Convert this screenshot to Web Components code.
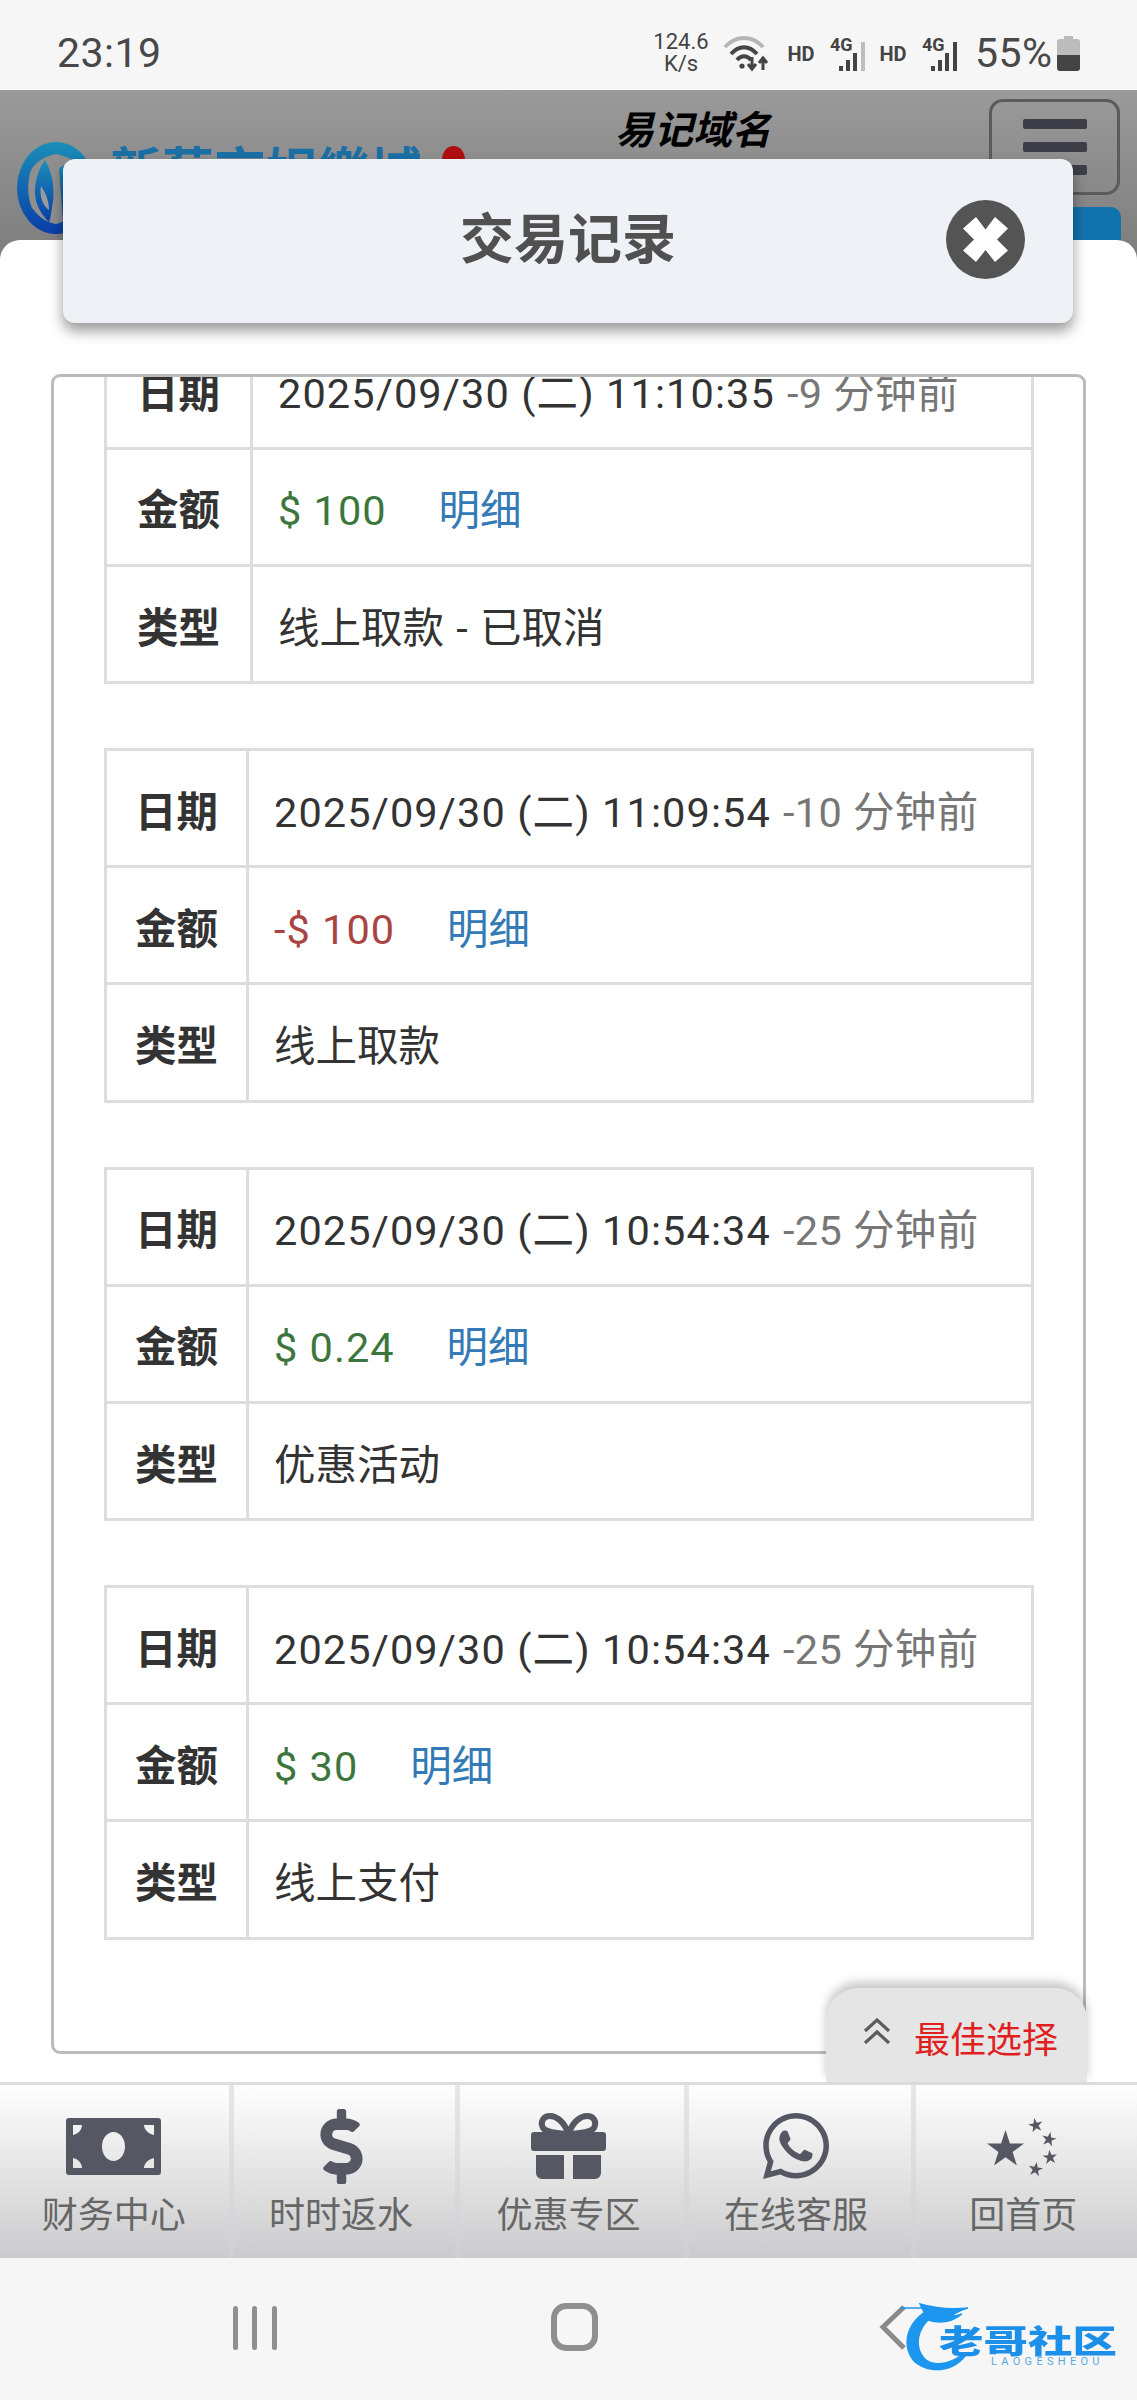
<!DOCTYPE html>
<html lang="zh"><head><meta charset="utf-8"><title>交易记录</title>
<style>
html,body{margin:0;padding:0;background:#f6f6f6}
body{font-family:Roboto,"Noto Sans CJK SC",sans-serif}
</style></head><body>
<app-shell></app-shell>
<script>
const FONT='Roboto,"Noto Sans CJK SC",sans-serif';
function def(name,html){
  customElements.define(name,class extends HTMLElement{
    connectedCallback(){ if(this.shadowRoot) return; const r=this.attachShadow({mode:'open'}); r.innerHTML=typeof html==='function'?html(this):html; }
  });
}
def('status-bar',`<style>
:host{display:flex;align-items:center;height:90px;background:#f6f6f6;color:#444;font-family:${FONT};box-sizing:border-box;padding:16px 57px 0 57px;flex:none}
.t{font-size:41px;line-height:1;letter-spacing:.5px;color:#484848}
.r{margin-left:auto;display:flex;align-items:center}
.sp{font-size:22px;line-height:22px;text-align:center;width:58px}
.hd{font-size:20px;font-weight:700;width:30px;text-align:center;padding-top:1px}
.pct{font-size:41px;line-height:1;margin-left:13px;width:82px;letter-spacing:.4px;color:#484848}
svg{display:block}
.g{position:relative;width:38px;height:36px;margin-left:16px}
.g b{position:absolute;left:-2px;top:2px;font-size:18px;font-weight:700;line-height:16px}
.g svg{position:absolute;left:6px;top:6px}
</style>
<span class="t">23:19</span>
<div class="r">
<div class="sp">124.6<br>K/s</div>
<svg width="50" height="38" viewBox="0 0 50 38" style="margin-left:12px"><path d="M3 13C14 1 30 1 41 13" fill="none" stroke="#b5b5b5" stroke-width="4"/><path d="M9 20C17 11 27 11 35 20" fill="none" stroke="#444" stroke-width="4"/><path d="M15 26C19 21 25 21 29 26" fill="none" stroke="#444" stroke-width="4"/><circle cx="20" cy="32" r="2.600" fill="#444"/><path d="M30 23v11M26 30l4 5 4-5M41 36V25M37 29l4-5 4 5" fill="none" stroke="#444" stroke-width="3"/></svg>
<div class="hd" style="margin-left:14px">HD</div>
<div class="g"><b>4G</b><svg width="32" height="32" viewBox="0 0 32 32"><g fill="#444"><rect x="1" y="25" width="4" height="5"/><rect x="8" y="19" width="4" height="11"/><rect x="15" y="12" width="4" height="18"/></g><rect x="23" y="1" width="4" height="29" fill="#bdbdbd"/></svg></div>
<div class="hd" style="margin-left:8px">HD</div>
<div class="g"><b>4G</b><svg width="32" height="32" viewBox="0 0 32 32"><g fill="#444"><rect x="1" y="25" width="4" height="5"/><rect x="8" y="19" width="4" height="11"/><rect x="15" y="12" width="4" height="18"/><rect x="23" y="1" width="4" height="29"/></g></svg></div>
<div class="pct">55%</div>
<svg width="23" height="35" viewBox="0 0 23 35"><path d="M7 0h9v3h4a3 3 0 0 1 3 3v13H0V6a3 3 0 0 1 3-3h4z" fill="#bcbcbc"/><path d="M0 19h23v13a3 3 0 0 1-3 3H3a3 3 0 0 1-3-3z" fill="#444"/></svg>
</div>`);

def('site-header',`<style>
:host{display:block;height:170px;overflow:hidden;background:linear-gradient(#9a9a9a,#7d7d7d);position:relative;font-family:${FONT};flex:none;margin-bottom:-20px}
.row{display:flex;height:150px}
.logo{display:flex;align-items:flex-start;padding:52px 0 0 17px;width:599px;box-sizing:border-box}
.title{width:390px;font-size:39px;font-weight:700;font-style:italic;color:#000;text-align:left;line-height:1;padding-top:22px;box-sizing:border-box;padding-left:16px}
.brand{font-size:52px;font-weight:700;color:#1a6fa5;line-height:1;margin-left:15px;margin-top:6px;white-space:nowrap;width:333px}
.drop{margin-left:-1px;margin-top:4px}
.burger{width:131px;height:96px;box-sizing:border-box;border:3px solid #5b5b5f;border-radius:14px;margin-top:9px;display:flex;flex-direction:column;align-items:center;justify-content:center;gap:13px}
.burger i{display:block;width:64px;height:10px;border-radius:2px;background:#3e3e48}
.blue{position:absolute;right:16px;top:117px;width:80px;height:60px;border-radius:10px 10px 0 0;background:#1272ad}
</style>
<div class="row"><div class="logo">
<svg width="78" height="92" viewBox="0 0 78 92"><defs><linearGradient id="lg" x1="0" y1="0" x2="0" y2="1"><stop offset="0" stop-color="#1a8fb8"/><stop offset="1" stop-color="#0a3da8"/></linearGradient></defs><ellipse cx="39" cy="46" rx="39" ry="46" fill="url(#lg)"/><path d="M14 28C20 18 30 14 39 12c10 2 20 6 26 16 4 12 2 28-4 38-8 10-14 14-22 16-10-2-16-6-24-16C10 54 10 40 14 28z" fill="#8f8f8f"/><path d="M28 18c6 10 10 24 8 42-2 10-2 16-4 20-8-8-14-18-14-30 0-12 4-24 10-32z" fill="url(#lg)"/><path d="M24 44c4 6 8 14 8 24-6-4-10-14-8-24z" fill="#9a9a9a"/><path d="M42 26l12-6 10 12v34l-18 14z" fill="url(#lg)"/></svg>
<span class="brand">新葡京娱樂城</span>
<svg class="drop" width="23" height="40" viewBox="0 0 23 40"><path d="M11.500 0C18 0 23 6 23 14c0 10-4 26-11.500 26S0 24 0 14C0 6 5 0 11.500 0z" fill="#b00f0f"/></svg>
</div>
<div class="title">易记域名</div>
<div class="burger"><i></i><i></i><i></i></div></div>
<div class="blue"></div>`);

def('modal-title',`<style>
:host{display:flex;align-items:center;justify-content:center;position:absolute;left:63px;top:159px;width:1010px;height:164px;background:#eef2f6;border-radius:12px;box-shadow:0 8px 14px rgba(0,0,0,.4);font-family:${FONT};z-index:3}
h1{margin:0;font-size:54px;line-height:1;font-weight:700;color:#505050;position:relative;top:0}
svg{position:absolute;left:883px;top:41px}
</style><h1>交易记录</h1>
<svg width="79" height="79" viewBox="0 0 79 79"><circle cx="39.500" cy="39.500" r="39.500" fill="#545454"/><path d="M39.500 29.500L49 17l13 11.500-11 11 11 11L49 62 39.500 50 30 62 17 50.500l11-11-11-11L30 17z" fill="#fff"/></svg>`);

def('tx-record',h=>{
 const g=n=>h.getAttribute(n)||'';
 const tone=g('tone');
 return `<style>
:host{display:grid;grid-template-columns:var(--lw,142px) 1fr;grid-template-rows:117px 117px 114.500px;box-sizing:border-box;border:3px solid #ddd;color:#333;font-family:${FONT};font-size:41.500px;background:#fff}
.l,.v{display:flex;align-items:center;line-height:1;white-space:nowrap;padding-top:9px;box-sizing:border-box}
.l{justify-content:center;font-weight:700;border-right:3px solid #ddd;color:#333}
.v{padding-left:25px}
.b{border-bottom:3px solid #ddd}
.d{letter-spacing:1.100px}
.ago{color:#777;margin-left:12px;letter-spacing:.4px}
.pos{color:#3c763d;letter-spacing:1px}.neg{color:#a94442;letter-spacing:1px}
.a{color:#337ab7;margin-left:52px}
.k{word-spacing:2px}
</style>
<div class="l b">日期</div><div class="v b"><span class="d">${g('date')}</span><span class="ago">${g('ago')}</span></div>
<div class="l b">金额</div><div class="v b"><span class="${tone}">${g('amount')}</span><span class="a">明细</span></div>
<div class="l">类型</div><div class="v k">${g('kind')}</div>`});

def('tx-list',`<style>
:host{display:block;box-sizing:border-box;height:1680px;margin:134px 51px 0 51px;border:3px solid #bbb;border-radius:9px;overflow:hidden;background:#fff}
.in{display:flex;flex-direction:column;gap:64px;margin-top:-47.500px;padding:0 49px 0 50px}
</style><div class="in">
<tx-record style="--lw:146px" date="2025/09/30 (二) 11:10:35" ago="-9 分钟前" amount="$ 100" tone="pos" kind="线上取款 - 已取消"></tx-record>
<tx-record date="2025/09/30 (二) 11:09:54" ago="-10 分钟前" amount="-$ 100" tone="neg" kind="线上取款"></tx-record>
<tx-record date="2025/09/30 (二) 10:54:34" ago="-25 分钟前" amount="$ 0.24" tone="pos" kind="优惠活动"></tx-record>
<tx-record date="2025/09/30 (二) 10:54:34" ago="-25 分钟前" amount="$ 30" tone="pos" kind="线上支付"></tx-record>
</div>`);

def('float-pill',`<style>
:host{display:flex;align-items:flex-start;position:absolute;right:50px;bottom:176px;width:261px;height:94px;box-sizing:border-box;background:#e5e5e5;border-radius:32px 32px 0 0;box-shadow:0 -6px 10px rgba(0,0,0,.22);font-family:${FONT};padding:30px 0 0 37px;z-index:2}
span{font-size:36px;line-height:1;color:#e01f1f;margin-left:23px;margin-top:5px}
</style><svg width="28" height="26" viewBox="0 0 28 26"><path d="M2 13L14 2l12 11M2 25L14 14l12 11" fill="none" stroke="#5c5c5c" stroke-width="3.200"/></svg><span>最佳选择</span>`);

def('nav-item',h=>`<style>
:host{display:flex;flex-direction:column;align-items:center;box-sizing:border-box;padding-top:23px;position:relative;font-family:${FONT};color:#666}
.ic{height:76px;display:flex;align-items:center;justify-content:center}
.lb{font-size:36px;line-height:1;margin-top:14px;white-space:nowrap}
</style><div class="ic"><slot></slot></div><div class="lb">${h.getAttribute('label')}</div>`);

def('bottom-nav',`<style>
:host{display:grid;grid-template-columns:repeat(5,1fr);height:176px;box-sizing:border-box;border-top:3px solid #ddd;flex:none;background:
linear-gradient(#e6e6e7,#d0d0d2) 229px 0/5px 100% no-repeat,linear-gradient(#e6e6e7,#d0d0d2) 455px 0/5px 100% no-repeat,linear-gradient(#e6e6e7,#d0d0d2) 684px 0/5px 100% no-repeat,linear-gradient(#e6e6e7,#d0d0d2) 911px 0/5px 100% no-repeat,linear-gradient(#fefefe,#cbcbcd)}
svg{display:block}
</style>
<nav-item label="财务中心"><svg width="95" height="57" viewBox="0 0 95 57"><path fill="#555763" fill-rule="evenodd" d="M3 0h89a3 3 0 0 1 3 3v51a3 3 0 0 1-3 3H3a3 3 0 0 1-3-3V3a3 3 0 0 1 3-3zM7 7v10c5-1 9-5 9-10zM88 7H78c0 5 5 9 10 10zM7 50h9c0-5-4-9-9-10zM88 50V40c-5 1-10 5-10 10zM47.500 14C41 14 36 20.500 36 28.500S41 43 47.500 43 59 36.500 59 28.500 54 14 47.500 14z"/></svg></nav-item>
<nav-item label="时时返水"><svg width="43" height="75" viewBox="0 0 288 512"><path fill="#555763" d="M209.200 233.400l-108-31.600C88.700 198.200 80 186.500 80 173.500c0-16.300 13.200-29.500 29.500-29.500h66.300c12.200 0 24.200 3.700 34.200 10.500 6.100 4.100 14.300 3.100 19.500-2l34.800-34c7.100-6.900 6.100-18.400-1.800-24.500C238 74.800 207.400 64.100 176 64V16c0-8.800-7.200-16-16-16h-32c-8.800 0-16 7.200-16 16v48h-2.500C45.800 64-5.400 118.700.5 183.600c4.200 46.100 39.400 83.600 83.800 96.600l102.500 30c12.500 3.700 21.200 15.300 21.200 28.300 0 16.300-13.200 29.500-29.500 29.500h-66.300C100 368 88 364.300 78 357.500c-6.100-4.100-14.300-3.100-19.500 2l-34.800 34c-7.100 6.900-6.100 18.400 1.800 24.500 24.500 19.200 55.100 29.900 86.500 30v48c0 8.800 7.200 16 16 16h32c8.800 0 16-7.200 16-16v-48.200c46.600-.9 90.300-28.600 105.700-72.700 21.500-61.600-14.600-124.800-72.500-141.700z"/></svg></nav-item>
<nav-item label="优惠专区"><svg width="75" height="66" viewBox="0 0 75 66"><g fill="#555763"><path d="M3 19h69a3 3 0 0 1 3 3v13a3 3 0 0 1-3 3H3a3 3 0 0 1-3-3V22a3 3 0 0 1 3-3zM5 42h28v24H11a6 6 0 0 1-6-6zM42 42h28v18a6 6 0 0 1-6 6H42z"/></g><path d="M37.500 21C33 8 25 3 19 3c-7 0-10 6-7 12 3 4 10 5 25.500 6zM37.500 21C42 8 50 3 56 3c7 0 10 6 7 12-3 4-10 5-25.500 6z" fill="none" stroke="#555763" stroke-width="6"/></svg></nav-item>
<nav-item label="在线客服"><svg width="66" height="66" viewBox="0 0 448 448"><path transform="translate(0 -32)" fill="#555763" d="M380.900 97.100C339 55.100 283.200 32 223.900 32c-122.400 0-222 99.600-222 222 0 39.100 10.200 77.300 29.600 111L0 480l117.700-30.900c32.400 17.700 68.900 27 106.100 27h.1c122.300 0 224.100-99.600 224.100-222 0-59.300-25.200-115-67.100-157zm-157 341.600c-33.200 0-65.700-8.900-94-25.700l-6.700-4-69.800 18.300L72 359.200l-4.400-7c-18.500-29.400-28.200-63.300-28.200-98.200 0-101.700 82.800-184.500 184.600-184.500 49.300 0 95.600 19.200 130.400 54.100 34.800 34.900 56.200 81.200 56.100 130.500 0 101.800-84.900 184.600-186.600 184.600zm101.200-138.200c-5.500-2.800-32.800-16.200-37.900-18-5.100-1.900-8.800-2.800-12.500 2.800-3.700 5.600-14.300 18-17.600 21.800-3.200 3.700-6.500 4.200-12 1.400-32.600-16.300-54-29.100-75.500-66-5.700-9.800 5.700-9.100 16.300-30.300 1.800-3.700.9-6.900-.5-9.700-1.400-2.800-12.500-30.100-17.100-41.200-4.500-10.800-9.100-9.300-12.500-9.500-3.200-.2-6.900-.2-10.600-.2-3.700 0-9.700 1.400-14.800 6.900-5.100 5.600-19.400 19-19.400 46.300 0 27.300 19.900 53.700 22.600 57.400 2.800 3.700 39.100 59.700 94.800 83.800 35.200 15.200 49 16.500 66.600 13.900 10.700-1.600 32.800-13.400 37.400-26.400 4.600-13 4.600-24.100 3.200-26.400-1.300-2.500-5-3.900-10.500-6.600z"/></svg></nav-item>
<nav-item label="回首页"><svg width="72" height="62" viewBox="0 0 72 62"><g fill="#555763"><path transform="translate(0 6)" d="M18.500 9l4.400 13.500H37L25.600 31l4.300 13.500-11.400-8.300-11.400 8.300L11.400 31 0 22.500h14.100z"/><path transform="translate(48.600 10) rotate(-12) scale(.72)" d="M0-10l2.400 7.300h7.600l-6.200 4.500 2.400 7.300L0 4.600-6.200 9.100l2.400-7.300-6.200-4.500h7.600z"/><path transform="translate(62 24) rotate(12) scale(.72)" d="M0-10l2.400 7.300h7.600l-6.200 4.500 2.400 7.300L0 4.600-6.200 9.100l2.400-7.300-6.200-4.500h7.600z"/><path transform="translate(63 42) rotate(-6) scale(.72)" d="M0-10l2.400 7.300h7.600l-6.200 4.500 2.400 7.300L0 4.600-6.200 9.100l2.400-7.300-6.200-4.500h7.600z"/><path transform="translate(48.600 54) rotate(10) scale(.72)" d="M0-10l2.400 7.300h7.600l-6.200 4.500 2.400 7.300L0 4.600-6.200 9.100l2.400-7.300-6.200-4.500h7.600z"/></g></svg></nav-item>`);

def('system-bar',`<style>
:host{display:flex;align-items:center;height:142px;background:#f6f6f6;flex:none;position:relative;font-family:${FONT}}
.wrap{display:grid;grid-template-columns:379px 379px 379px;width:100%;height:100%}
.c{display:flex;align-items:center;justify-content:center}
.three{display:flex;gap:14.500px;position:relative;left:65px;top:-1px}
.three i{display:block;width:5px;height:44px;border-radius:3px;background:#8f8f8f}
.home{width:47px;height:48px;border:6px solid #8f8f8f;box-sizing:border-box;border-radius:15px;position:relative;left:6px;top:-2px}
.r{justify-content:flex-start;position:relative}
svg{display:block}
.ch{position:absolute;left:121px;top:46px}
.sw{position:absolute;left:140px;top:42px}
.brand{position:absolute;left:181px;top:65px;width:178px;font-size:32px;line-height:1;font-weight:900;color:#1c8fe8;letter-spacing:0;white-space:nowrap;font-family:"Noto Sans CJK SC",sans-serif;transform:scaleX(1.390);transform-origin:0 50%;filter:blur(.5px)}
.en{position:absolute;left:233px;top:98px;font-size:11px;letter-spacing:4.300px;color:#5aa9dd;line-height:1;white-space:nowrap;font-family:Roboto,sans-serif}
</style><div class="wrap">
<div class="c"><div class="three"><i></i><i></i><i></i></div></div>
<div class="c"><div class="home"></div></div>
<div class="c r">
<svg class="ch" width="28" height="48" viewBox="0 0 28 48"><path d="M25 3L4 23l21 21" fill="none" stroke="#8a8a8a" stroke-width="5"/></svg>
<svg class="sw" style="filter:blur(.6px)" width="100" height="76" viewBox="0 0 100 76"><path d="M29 10C8 22 2 46 16 62c14 12 38 12 52-6l-4-2C48 66 30 66 24 54 16 40 24 22 40 14z" fill="#1c96ee"/><path d="M2 8h22M22 4c14 4 28 6 48 4-8 2-14 6-18 8 4 0 8 0 12-2-10 8-22 10-34 6z" fill="#1c96ee" stroke="#1c96ee" stroke-width="1.500"/></svg>
<span class="brand">老哥社区</span><span class="en">LAOGESHEOU</span>
</div></div>`);

def('app-shell',`<style>
:host{display:flex;flex-direction:column;width:1137px;height:2400px;overflow:hidden;position:relative;background:#fff}
.sheet{flex:1;background:#fff;border-radius:20px 20px 0 0;position:relative;z-index:1;display:flex;flex-direction:column;overflow:hidden;min-height:0}
.grow{flex:1}
</style>
<status-bar></status-bar>
<site-header></site-header>
<section class="sheet"><tx-list></tx-list><float-pill></float-pill><div class="grow"></div><bottom-nav></bottom-nav></section>
<modal-title></modal-title>
<system-bar></system-bar>`);
</script>
</body></html>
